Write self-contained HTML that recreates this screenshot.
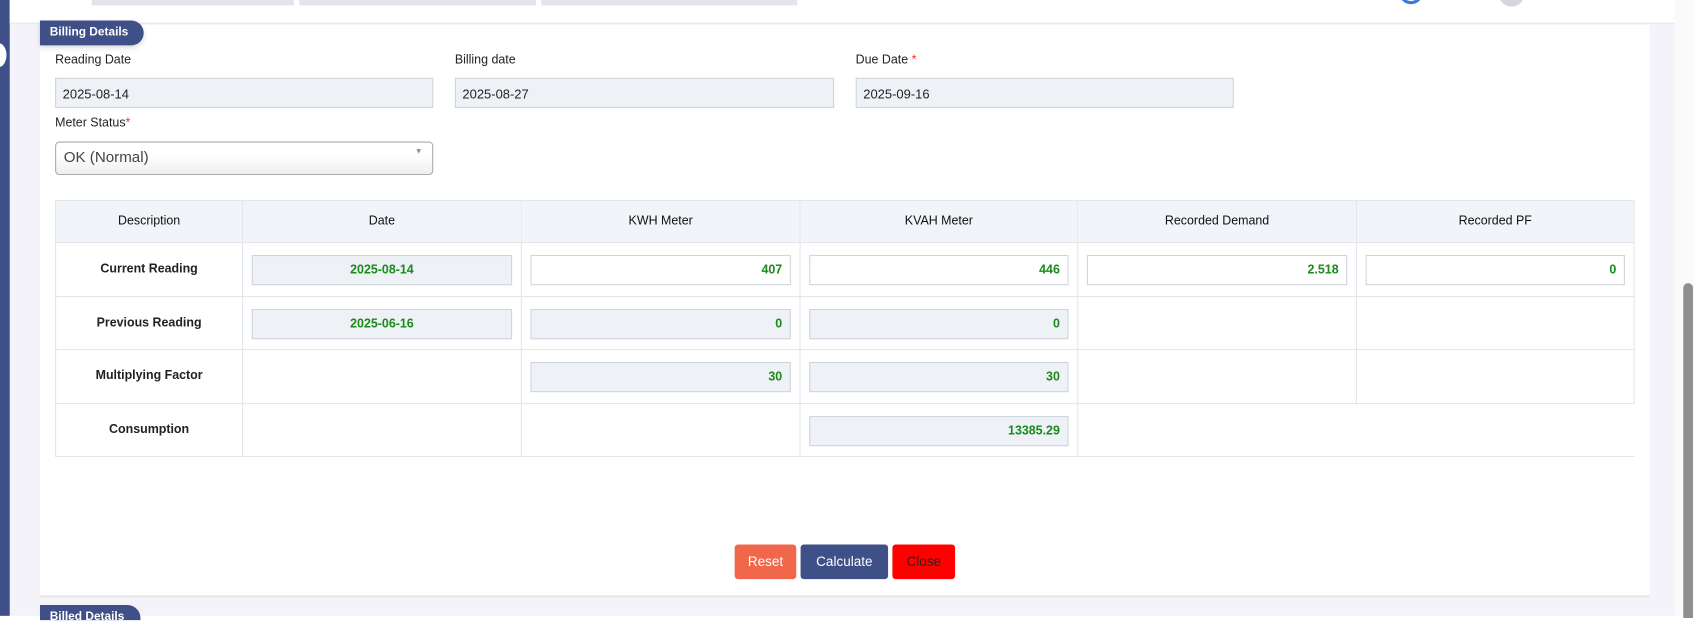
<!DOCTYPE html>
<html><head><meta charset="utf-8"><style>
*{box-sizing:border-box;margin:0;padding:0}
html,body{width:1694px;height:616px;overflow:hidden;background:#fff}
#w{position:absolute;left:0;top:0;width:1568px;height:570px;transform:scale(1.0804);transform-origin:0 0;font-family:"Liberation Sans",sans-serif;background:#f3f3f9}
.a{position:absolute}
.lbl{font-size:11.5px;color:#222}
.inp{position:absolute;height:28px;background:#eef1f6;border:1px solid #cfd5dc;font-size:12px;color:#222;padding:7px 6px}
table{position:absolute;left:51px;top:185px;width:1462px;border-collapse:collapse;font-size:11.5px}
td,th{border:1px solid #e3e6ea;text-align:center;height:49.5px;position:relative}
th{background:#f1f4f8;font-weight:normal;color:#111;height:39px}
td.d{font-weight:bold;color:#222}
.ci{position:absolute;left:8px;right:8px;top:11px;height:28px;border:1px solid #cfd5dc;background:#eef1f6;color:#1a8a1a;font-weight:bold;font-size:11.5px;padding:7px 7px;text-align:right}
.ci.w{background:#fff}
.ci.c{text-align:center}
.btn{position:absolute;top:504px;height:32px;border-radius:3px;font-size:12.5px;text-align:center;line-height:32px;color:#fff}
</style></head><body><div id="w">
<div class="a" style="left:0;top:0;width:9px;height:570px;background:#3f4f87"></div>
<div class="a" style="left:-8px;top:40px;width:14px;height:22px;border-radius:50%;background:#fff"></div>
<div class="a" style="left:9px;top:0;width:1541px;height:22px;background:#fff;border-bottom:1px solid #e6e6ec"></div>
<div class="a" style="left:85px;top:0;width:187px;height:5px;background:#e2e5ee"></div>
<div class="a" style="left:277px;top:0;width:219px;height:5px;background:#e2e5ee"></div>
<div class="a" style="left:501px;top:0;width:237px;height:5px;background:#e2e5ee"></div>
<div class="a" style="left:1295px;top:-8px;width:22px;height:12px;border-radius:0 0 11px 11px;border:3px solid #3a7bd5;border-top:none"></div>
<div class="a" style="left:1388px;top:-12px;width:22px;height:18px;border-radius:50%;background:#d5d7de"></div>
<div class="a" style="left:1550px;top:0;width:18px;height:570px;background:#fafafa"></div>
<div class="a" style="left:1558px;top:262px;width:9px;height:310px;border-radius:5px 5px 0 0;background:#8f8f8f"></div>
<div class="a" style="left:37px;top:23px;width:1490px;height:530px;background:#fff;border-bottom:2px solid #e6e6ea"></div>
<div class="a" style="left:37px;top:19px;width:96px;height:23px;background:#3f4f87;border-radius:0 12px 12px 0;color:#fff;font-weight:bold;font-size:11px;line-height:23px;padding-left:9px;box-shadow:0 2px 5px rgba(0,0,0,.15)">Billing Details</div>
<div class="a lbl" style="left:51px;top:50px">Reading Date</div>
<div class="a lbl" style="left:421px;top:50px">Billing date</div>
<div class="a lbl" style="left:792px;top:50px">Due Date <span style="color:#e33">*</span></div>
<div class="inp" style="left:51px;top:72px;width:350px">2025-08-14</div>
<div class="inp" style="left:421px;top:72px;width:351px">2025-08-27</div>
<div class="inp" style="left:792px;top:72px;width:350px">2025-09-16</div>
<div class="a lbl" style="left:51px;top:108px">Meter Status<span style="color:#e33">*</span></div>
<div class="a" style="left:51px;top:131px;width:350px;height:31px;border:1px solid #aaa;border-radius:4px;background:linear-gradient(#fff 40%,#eee);font-size:14px;color:#444;padding:5px 7px">OK (Normal)<span style="position:absolute;right:9px;top:5px;font-size:7px;color:#888">▼</span></div>
<table>
<tr><th style="width:173px">Description</th><th style="width:258px">Date</th><th style="width:258px">KWH Meter</th><th style="width:257px">KVAH Meter</th><th style="width:258px">Recorded Demand</th><th>Recorded PF</th></tr>
<tr><td class="d">Current Reading</td><td><div class="ci c">2025-08-14</div></td><td><div class="ci w">407</div></td><td><div class="ci w">446</div></td><td><div class="ci w">2.518</div></td><td><div class="ci w">0</div></td></tr>
<tr><td class="d">Previous Reading</td><td><div class="ci c">2025-06-16</div></td><td><div class="ci">0</div></td><td><div class="ci">0</div></td><td></td><td></td></tr>
<tr><td class="d">Multiplying Factor</td><td></td><td><div class="ci">30</div></td><td><div class="ci">30</div></td><td></td><td></td></tr>
<tr><td class="d">Consumption</td><td></td><td></td><td><div class="ci">13385.29</div></td><td style="border-right:none"></td><td style="border-left:none;border-right:none"></td></tr>
</table>
<div class="btn" style="left:680px;width:57px;background:#f0674b">Reset</div>
<div class="btn" style="left:741px;width:81px;background:#3f4f87">Calculate</div>
<div class="btn" style="left:826px;width:58px;background:#ff0000;color:#222">Close</div>
<div class="a" style="left:37px;top:560px;width:93px;height:14px;background:#3f4f87;border-radius:0 12px 0 0;color:#fff;font-weight:bold;font-size:11px;padding:5px 0 0 9px;line-height:12px">Billed Details</div>
</div></body></html>
